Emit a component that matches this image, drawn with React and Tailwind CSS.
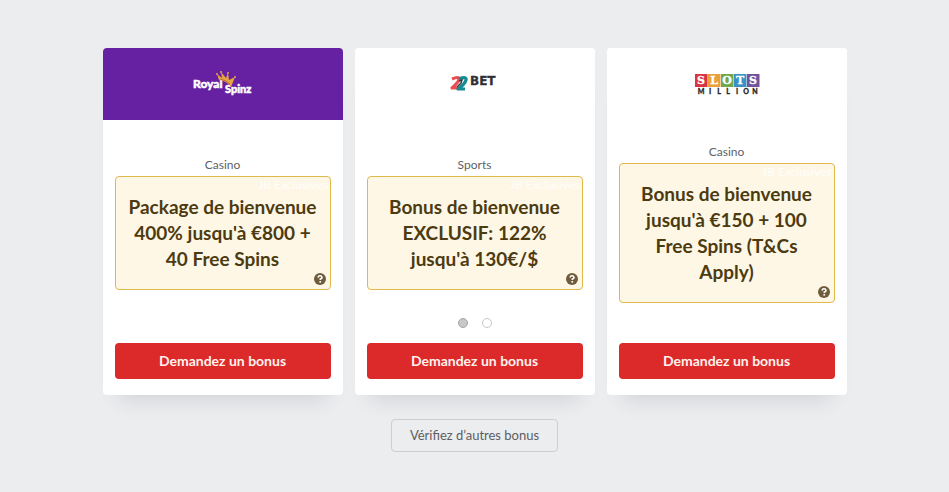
import React from "react";

function RoyalSpinzLogo() {
  return (
    <svg viewBox="0 0 60 26" className="h-[26px] w-[60px]" role="img" aria-label="Royal Spinz" fontFamily="Lato, sans-serif">
      <g fill="#fff" stroke="#fff" strokeWidth="0.5" fontWeight="900">
        <text x="0" y="17" fontSize="12">Royal</text>
        <text x="32" y="22" fontSize="11">Spinz</text>
      </g>
      <g fill="#e8a443">
        <path d="m26 9-2-6 5 4-1-6 5 6 2-5 1 7 6-3-4 10q-4-6-12-7Z" />
        <circle cx="24" cy="3" r="1" />
        <circle cx="28" cy="1" r="1" />
        <circle cx="35" cy="2" r="1" />
        <circle cx="42" cy="6" r="1" />
      </g>
      <path d="M27 8q6 1 10 5" fill="none" stroke="#8b4d35" strokeWidth="0.6" />
    </svg>
  );
}

function BetLogo() {
  return (
    <svg viewBox="0 0 52 20" className="h-5 w-[52px]" role="img" aria-label="22 Bet">
      <g fill="none" strokeWidth="3.2" strokeLinejoin="round">
        <path d="M3 5Q10 2 10 5T3 14H9" stroke="#ec4c50" />
        <path d="M10 5Q18 2 17 6T9 15H16" stroke="#168b91" />
      </g>
      <path d="M10 7l3-1-1 3-4 4" fill="none" stroke="#343541" strokeWidth="1.4" />
      <text x="21" y="11" fill="#303036" stroke="#303036" strokeWidth="0.3" fontFamily="'DejaVu Sans', sans-serif" fontWeight="700" fontSize="12">BET</text>
    </svg>
  );
}

const slotTiles = [
  ["S", "#d93443"],
  ["L", "#e8a13b"],
  ["O", "#70a84b"],
  ["T", "#3b91c2"],
  ["S", "#71549b"],
];

function SlotsLogo() {
  return (
    <svg viewBox="0 0 66 22" className="h-[22px] w-[66px]" role="img" aria-label="Slots Million" textAnchor="middle">
      {slotTiles.map(([letter, color], i) => (
        <g key={i}>
          <rect x={i * 13 + 1} y="1" width="12.500" height="13" fill={color} />
          <text x={i * 13 + 7} y="11" fontSize="11" fontWeight="700" fill="#fff" stroke="#fff" strokeWidth="0.3" fontFamily="'DejaVu Serif', serif">{letter}</text>
        </g>
      ))}
      {"MILLION".split("").map((letter, i) => (
        <text key={i} x={i * 9 + 7} y="21" fontSize="7" fontWeight="900" fill="#292929" stroke="#292929" strokeWidth="0.3" fontFamily="Lato, sans-serif">{letter}</text>
      ))}
    </svg>
  );
}

const offers = [
  { Logo: RoyalSpinzLogo, header: "bg-[#6621a2]", type: "Casino", title: "Package de bienvenue 400% jusqu'à €800 + 40 Free Spins" },
  { Logo: BetLogo, header: "bg-white", type: "Sports", title: "Bonus de bienvenue EXCLUSIF: 122% jusqu'à 130€/$", slides: true },
  { Logo: SlotsLogo, header: "bg-white", type: "Casino", title: "Bonus de bienvenue jusqu'à €150 + 100 Free Spins (T&Cs Apply)" },
];

function OfferCard({ offer }) {
  const { Logo, header, type, title, slides } = offer;
  return (
    <article className="flex flex-col rounded bg-white shadow-[0_20px_20px_-16px_rgba(40,45,55,0.14)]">
      <header className={`flex h-[72px] items-center justify-center rounded-t ${header}`}>
        <Logo />
      </header>
      <div className="flex flex-1 flex-col px-3 pb-4">
        <div className="flex min-h-[223px] flex-1 flex-col justify-center pb-5">
          <p className="text-center text-xs leading-[22px] text-[#606166]">{type}</p>
          <div className="relative rounded border border-[#dfb94b] bg-[#fef7e6] px-3 py-[17px]">
            <span className="absolute top-0 right-0.5 text-xs leading-4 text-white/80">JB Exclusives</span>
            <h2 className="text-center text-[19px] leading-[26px] font-bold text-[#4c3b11]">{title}</h2>
            <button type="button" aria-label="Informations" className="absolute right-1 bottom-1 h-3 w-3 text-[#6f5c3c]">
              <svg viewBox="0 0 12 12" className="h-3 w-3" aria-hidden="true">
                <circle cx="6" cy="6" r="6" fill="currentColor" />
                <path d="M4 4.5Q4.300 2.800 6 2.800T8 4.400Q8 5.500 6.300 6.100V7" fill="none" stroke="#fff" strokeWidth="1.600" />
                <rect x="5.400" y="8" width="1.700" height="1.600" fill="#fff" />
              </svg>
            </button>
          </div>
          {slides && (
            <div className="relative">
              <div className="absolute inset-x-0 top-7 flex justify-center gap-[14px]">
                <button type="button" aria-label="Bonus 1" className="h-[10px] w-[10px] rounded-full border border-[#a5a5a5] bg-[#c8c8c8]" />
                <button type="button" aria-label="Bonus 2" className="h-[10px] w-[10px] rounded-full border border-[#c8c8c8] bg-white" />
              </div>
            </div>
          )}
        </div>
        <button type="button" className="h-9 rounded bg-[#dc292a] text-sm font-bold text-[#fff2ed]">Demandez un bonus</button>
      </div>
    </article>
  );
}

export default function App() {
  return (
    <main className="min-h-screen bg-[#ebedef] px-3 py-12 font-[Lato,sans-serif]">
      <section className="mx-auto grid max-w-[744px] grid-cols-1 gap-3 sm:grid-cols-3">
        {offers.map((offer) => <OfferCard key={offer.title} offer={offer} />)}
      </section>
      <div className="mt-6 flex justify-center">
        <button type="button" className="h-[33px] rounded border border-[#cccfd1] px-[18px] text-[13px] text-[#5d5e61]">Vérifiez d’autres bonus</button>
      </div>
    </main>
  );
}
